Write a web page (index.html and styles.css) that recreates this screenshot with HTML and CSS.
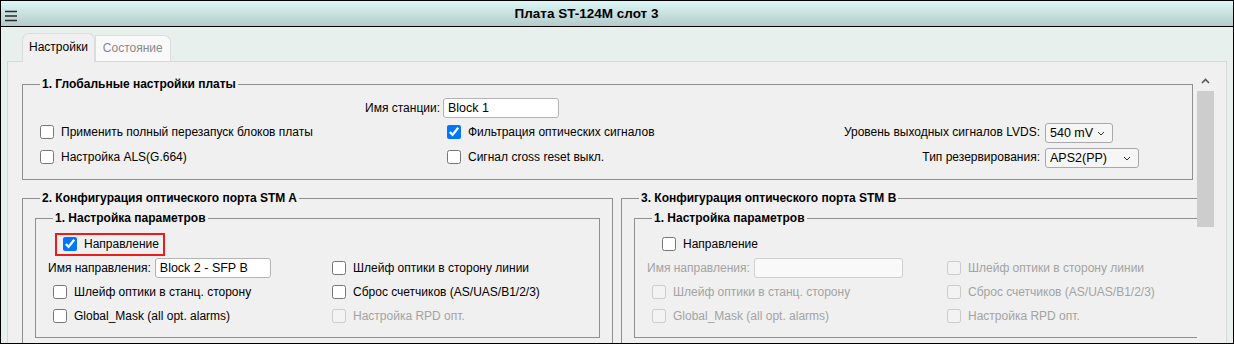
FILE: index.html
```html
<!DOCTYPE html>
<html lang="ru">
<head>
  <meta charset="UTF-8">
  <title>Плата ST-124M слот 3</title>
  <meta name="viewport" content="width=device-width, initial-scale=1.0">
  <link rel="stylesheet" href="styles.css">
</head>
<body>
  <div class="window">
    <div class="titlebar">
      <svg class="menu-icon" width="14" height="24" viewBox="0 0 14 24">
        <path d="M1 9.5H13M1 14H13M1 18.5H13" stroke="#2a2a2a" stroke-width="1.4" fill="none"/>
      </svg>
      <div class="title">Плата ST-124M слот 3</div>
    </div>

    <div class="content">
      <div class="tabs">
        <div class="tab active">Настройки</div>
        <div class="tab">Состояние</div>
      </div>

      <div class="panel">
        <div class="scroll-area">
          <fieldset class="group global">
            <legend>1. Глобальные настройки платы</legend>
            <div class="global-grid">
              <label class="station-label" for="station">Имя станции:</label>
              <input class="text-input station-input" id="station" type="text" value="Block 1">

              <label class="check"><input type="checkbox"><span>Применить полный перезапуск блоков платы</span></label>
              <label class="check"><input type="checkbox" checked><span>Фильтрация оптических сигналов</span></label>
              <span class="field-label">Уровень выходных сигналов LVDS:</span>
              <span class="select-wrap">
                <select class="select lvds"><option>540 mV</option></select>
                <svg class="chevron" width="8" height="5" viewBox="0 0 8 5"><path d="M1 1L4 4L7 1" stroke="#333" fill="none"/></svg>
              </span>

              <label class="check"><input type="checkbox"><span>Настройка ALS(G.664)</span></label>
              <label class="check"><input type="checkbox"><span>Сигнал cross reset выкл.</span></label>
              <span class="field-label">Тип резервирования:</span>
              <span class="select-wrap">
                <select class="select reserve"><option>APS2(PP)</option></select>
                <svg class="chevron" width="8" height="5" viewBox="0 0 8 5"><path d="M1 1L4 4L7 1" stroke="#333" fill="none"/></svg>
              </span>
            </div>
          </fieldset>

          <div class="ports">
            <fieldset class="group port">
              <legend>2. Конфигурация оптического порта STM A</legend>
              <fieldset class="group params-box">
                <legend>1. Настройка параметров</legend>
                <div class="params params-a">
                  <label class="check dir-check highlight"><input type="checkbox" checked><span>Направление</span></label>
                  <span></span>
                  <div class="name-row">
                    <label for="dirA">Имя направления:</label>
                    <input class="text-input name-a" id="dirA" type="text" value="Block 2 - SFP B">
                  </div>
                  <label class="check"><input type="checkbox"><span>Шлейф оптики в сторону линии</span></label>
                  <label class="check indent"><input type="checkbox"><span>Шлейф оптики в станц. сторону</span></label>
                  <label class="check"><input type="checkbox"><span>Сброс счетчиков (AS/UAS/B1/2/3)</span></label>
                  <label class="check indent"><input type="checkbox"><span>Global_Mask (all opt. alarms)</span></label>
                  <label class="check disabled"><input type="checkbox" disabled><span>Настройка RPD опт.</span></label>
                </div>
              </fieldset>
            </fieldset>

            <fieldset class="group port">
              <legend>3. Конфигурация оптического порта STM B</legend>
              <fieldset class="group params-box">
                <legend>1. Настройка параметров</legend>
                <div class="params params-b">
                  <label class="check dir-check"><input type="checkbox"><span>Направление</span></label>
                  <span></span>
                  <div class="name-row disabled">
                    <label for="dirB">Имя направления:</label>
                    <input class="text-input name-b" id="dirB" type="text" disabled>
                  </div>
                  <label class="check disabled"><input type="checkbox" disabled><span>Шлейф оптики в сторону линии</span></label>
                  <label class="check indent disabled"><input type="checkbox" disabled><span>Шлейф оптики в станц. сторону</span></label>
                  <label class="check disabled"><input type="checkbox" disabled><span>Сброс счетчиков (AS/UAS/B1/2/3)</span></label>
                  <label class="check indent disabled"><input type="checkbox" disabled><span>Global_Mask (all opt. alarms)</span></label>
                  <label class="check disabled"><input type="checkbox" disabled><span>Настройка RPD опт.</span></label>
                </div>
              </fieldset>
            </fieldset>
          </div>
        </div>

        <div class="scrollbar">
          <div class="scroll-up">
            <svg width="9" height="6" viewBox="0 0 9 6"><path d="M1 5L4.5 1.5L8 5" stroke="#555" stroke-width="1.6" fill="none"/></svg>
          </div>
          <div class="scroll-thumb"></div>
        </div>
      </div>
    </div>
  </div>
</body>
</html>
```

FILE: styles.css
```css
* {
  box-sizing: border-box;
}

body {
  margin: 0;
  font-family: "Liberation Sans", Arial, sans-serif;
  font-size: 12px;
  color: #000;
  background: #fff;
}

.window {
  width: 1234px;
  height: 344px;
  border: 1px solid #000;
  overflow: hidden;
  background: #e8f0ee;
}

/* title bar */
.titlebar {
  display: flex;
  align-items: center;
  height: 26px;
  padding-left: 3px;
  border-bottom: 1px solid #000;
  background: linear-gradient(#dcf8f6, #b5caca);
}

.menu-icon {
  flex: none;
}

.title {
  flex: 1;
  padding-right: 78px;
  text-align: center;
  font-weight: bold;
  font-size: 13.5px;
}

.content {
  padding: 6px 6px 0 6px;
}

/* tabs */
.tabs {
  position: relative;
  display: flex;
  align-items: flex-end;
  margin-left: 15px;
  margin-bottom: -1px;
  font-size: 12px;
}

.tab {
  height: 26px;
  line-height: 25px;
  padding: 0 7px;
  margin-bottom: 1px;
  border: 1px solid #dcdcdc;
  border-bottom: none;
  border-radius: 0 7px 0 0;
  background: #f9f9f9;
  color: #8a8a8a;
}

.tab.active {
  height: 29px;
  line-height: 27px;
  padding: 0 6px;
  margin-bottom: 0;
  border-radius: 7px 7px 0 0;
  background: #f0f0f0;
  color: #000;
}

/* panel */
.panel {
  display: flex;
  height: 300px;
  background: #f0f0f0;
  border: 1px solid #d8d8d8;
}

.scroll-area {
  flex: 1;
  overflow: hidden;
}

.scrollbar {
  flex: none;
  width: 17px;
  margin: 9px 12px 0 0;
}

.scroll-up {
  display: flex;
  align-items: center;
  justify-content: center;
  height: 19px;
}

.scroll-thumb {
  height: 136px;
  margin-top: 1px;
  background: #cdcdcd;
}

/* groups */
.group {
  margin: 0;
  padding: 0;
  min-width: 0;
  border: 1px solid #8f8f8f;
}

.group legend {
  margin-left: 17px;
  padding: 0 2px;
  font-weight: bold;
  line-height: 15px;
}

.global {
  margin: 15px 4px 0 14px;
}

.global-grid {
  display: grid;
  grid-template-columns: 407px 1fr auto 134px;
  grid-template-rows: 24px 24px 25px;
  align-items: center;
  padding: 4px 13px 10px 13px;
}

.station-label {
  justify-self: end;
  margin-right: 3px;
}

.station-input {
  grid-column: 2 / span 3;
  width: 116px;
}

.field-label {
  justify-self: end;
  padding-right: 5px;
}

.check {
  display: flex;
  align-items: center;
  gap: 4px;
  white-space: nowrap;
}

.check input {
  margin: 3px 3px 3px 4px;
  width: 14px;
  height: 14px;
}

.disabled {
  color: #a3a3a3;
}

/* inputs */
.text-input {
  height: 20px;
  padding: 0 4px;
  border: 1px solid #b3b3b3;
  border-radius: 3px;
  background: #fff;
  font-family: "Liberation Sans", Arial, sans-serif;
  font-size: 12.5px;
  color: #000;
}

.text-input:disabled {
  background: #f9f9f9;
  border-color: #cfcfcf;
}

.select-wrap {
  position: relative;
  justify-self: start;
  margin-top: 2px;
  height: 20px;
}

.select {
  appearance: none;
  height: 20px;
  padding: 0 0 0 4px;
  border: 1px solid #a9a9a9;
  border-radius: 3px;
  background: #f6f6f6;
  font-family: "Liberation Sans", Arial, sans-serif;
  font-size: 12.5px;
  color: #000;
}

.select.lvds {
  width: 68px;
}

.select.reserve {
  width: 94px;
}

.chevron {
  position: absolute;
  right: 8px;
  top: 8px;
}

/* port groups */
.ports {
  display: flex;
  gap: 8px;
  margin: 11px 0 0 14px;
}

.port {
  flex: none;
  width: 591px;
  height: 200px;
}

.params-box {
  margin: 5px 12px 0 12px;
}

.params {
  display: grid;
  grid-template-rows: repeat(4, 24px);
  align-items: center;
  padding: 6px 12px 9px 12px;
}

.params-a {
  grid-template-columns: 280px auto;
}

.params-b {
  grid-template-columns: 296px auto;
}

.dir-check {
  justify-self: start;
  height: 23px;
  margin-left: 7px;
  padding: 0 4px 0 0;
  border: 2px solid transparent;
}

.dir-check input {
  margin-left: 6px;
}

.highlight {
  border-color: #ea1c1c;
}

.name-row {
  display: flex;
  align-items: center;
  gap: 4px;
}

.name-a {
  width: 116px;
}

.name-b {
  width: 149px;
}

.indent {
  margin-left: 1px;
}
```
